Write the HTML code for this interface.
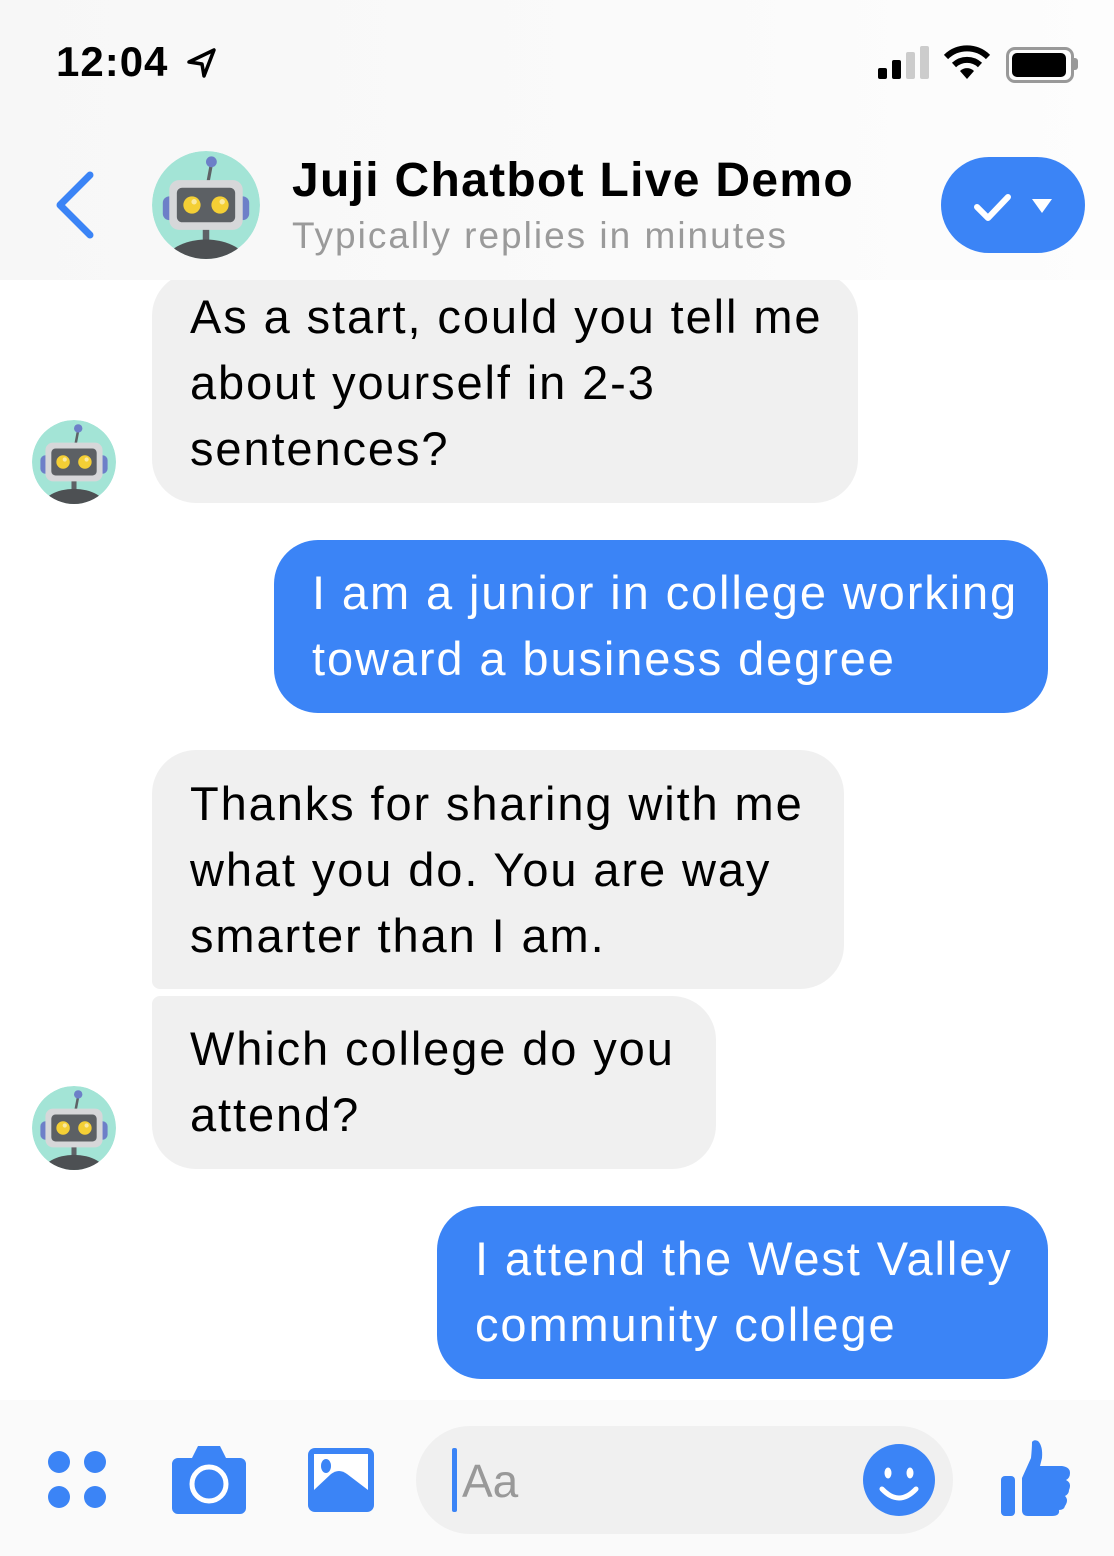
<!DOCTYPE html><html><head><meta charset="utf-8"><style>
body{margin:0;width:1114px;height:1556px;background:#fff;position:relative;overflow:hidden;font-family:"Liberation Sans",sans-serif}
.a{position:absolute}
.b{position:absolute;font-size:47px;line-height:66px;padding:20px 38px 21px;box-sizing:border-box;border-radius:44px;letter-spacing:1.9px;white-space:nowrap}
.g{background:#f0f0f0;color:#000}
.u{background:#3b84f6;color:#fff}
</style></head><body>
<svg width="0" height="0" style="position:absolute"><defs>
<clipPath id="cc"><circle cx="50" cy="50" r="50"/></clipPath>
<g id="bot"><g clip-path="url(#cc)"><circle cx="50" cy="50" r="50" fill="#a3e4d6"/>
<rect x="10" y="42" width="12" height="22" rx="6" fill="#6d7fc8"/><rect x="78" y="42" width="12" height="22" rx="6" fill="#6d7fc8"/>
<line x1="52" y1="28" x2="55" y2="12" stroke="#5e6266" stroke-width="3"/><circle cx="55" cy="10" r="5" fill="#6d7fc8"/>
<rect x="47" y="70" width="6" height="14" fill="#5e6266"/>
<ellipse cx="50" cy="104" rx="38" ry="22" fill="#4d5053"/>
<rect x="16" y="27" width="68" height="46" rx="9" fill="#d6d7d9"/>
<rect x="23" y="34" width="54" height="32" rx="5" fill="#5c6064"/>
<circle cx="37" cy="50" r="8" fill="#f4cf35"/><circle cx="63" cy="50" r="8" fill="#f4cf35"/>
<circle cx="39" cy="47" r="2.5" fill="#fff8"/><circle cx="65" cy="47" r="2.5" fill="#fff8"/></g></g>
</defs></svg>
<div class="b g" style="left:152px;top:272px;width:706px;height:231px;padding-top:12px">As a start, could you tell me<br>about yourself in 2-3<br>sentences?</div>
<div class="a" style="left:0;top:0;width:1114px;height:280px;background:linear-gradient(90deg,#f7f7f7,#fafafa 60%,#fdfdfd)"></div>
<div class="a" style="left:56px;top:38px;font-size:42px;font-weight:bold;letter-spacing:1px">12:04</div>
<svg class="a" style="left:186px;top:46px" width="32" height="34" viewBox="0 0 32 34"><path d="M3 16 L28 4 L18 30 L16 18 Z" fill="none" stroke="#000" stroke-width="3.5" stroke-linejoin="round"/></svg>
<div class="a" style="left:878px;top:68px;width:9px;height:11px;background:#000;border-radius:2px"></div>
<div class="a" style="left:892px;top:60px;width:9px;height:19px;background:#000;border-radius:2px"></div>
<div class="a" style="left:906px;top:52px;width:9px;height:27px;background:#ccc;border-radius:2px"></div>
<div class="a" style="left:920px;top:46px;width:9px;height:33px;background:#ccc;border-radius:2px"></div>
<svg class="a" style="left:943px;top:45px" width="48" height="36" viewBox="0 0 48 36"><path d="M3 12 A30 30 0 0 1 45 12" fill="none" stroke="#000" stroke-width="6"/><path d="M11 20 A19 19 0 0 1 37 20" fill="none" stroke="#000" stroke-width="6"/><path d="M17 26 L24 34 L31 26 A10 10 0 0 0 17 26Z"/></svg>
<div class="a" style="left:1006px;top:47px;width:62px;height:30px;border:3px solid #999;border-radius:9px"></div>
<div class="a" style="left:1012px;top:53px;width:54px;height:24px;background:#000;border-radius:5px"></div>
<div class="a" style="left:1074px;top:58px;width:4px;height:12px;background:#999;border-radius:0 3px 3px 0"></div>
<svg class="a" style="left:52px;top:170px" width="44" height="70" viewBox="0 0 44 70"><path d="M38 5 L8 35 L38 65" fill="none" stroke="#3b84f6" stroke-width="7" stroke-linecap="round" stroke-linejoin="round"/></svg>
<svg class="a" style="left:152px;top:151px" width="108" height="108" viewBox="0 0 100 100"><use href="#bot"/></svg>
<div class="a" style="left:292px;top:153px;font-size:48px;font-weight:bold;letter-spacing:1.3px">Juji Chatbot Live Demo</div>
<div class="a" style="left:292px;top:215px;font-size:37px;color:#9a9a9a;letter-spacing:2px">Typically replies in minutes</div>
<div class="a" style="left:941px;top:157px;width:144px;height:96px;border-radius:48px;background:#3b84f6"></div>
<svg class="a" style="left:972px;top:185px" width="90" height="40" viewBox="0 0 90 40"><path d="M5 22 L16 33 L36 12" fill="none" stroke="#fff" stroke-width="6" stroke-linecap="round" stroke-linejoin="round"/><path d="M60 14 L80 14 L70 28Z" fill="#fff"/></svg>

<svg class="a" style="left:32px;top:420px" width="84" height="84" viewBox="0 0 100 100"><use href="#bot"/></svg>
<div class="b u" style="left:274px;top:540px;width:774px;height:173px">I am a junior in college working<br>toward a business degree</div>
<div class="b g" style="left:152px;top:750px;width:692px;height:239px;border-bottom-left-radius:8px;padding-top:21px">Thanks for sharing with me<br>what you do. You are way<br>smarter than I am.</div>
<div class="b g" style="left:152px;top:996px;width:564px;height:173px;border-top-left-radius:8px">Which college do you<br>attend?</div>
<svg class="a" style="left:32px;top:1086px" width="84" height="84" viewBox="0 0 100 100"><use href="#bot"/></svg>
<div class="b u" style="left:437px;top:1206px;width:611px;height:173px">I attend the West Valley<br>community college</div>

<div class="a" style="left:0;top:1400px;width:1114px;height:156px;background:#fafafa"></div>
<svg class="a" style="left:40px;top:1445px" width="72" height="72" viewBox="0 0 72 72" fill="#3b84f6"><circle cx="19" cy="17" r="11"/><circle cx="55" cy="17" r="11"/><circle cx="19" cy="52" r="11"/><circle cx="55" cy="52" r="11"/></svg>
<svg class="a" style="left:170px;top:1444px" width="80" height="72" viewBox="0 0 80 72"><path d="M8 14 H22 L28 2 H50 L56 14 H70 A6 6 0 0 1 76 20 V64 A6 6 0 0 1 70 70 H8 A6 6 0 0 1 2 64 V20 A6 6 0 0 1 8 14Z" fill="#3b84f6"/><circle cx="39" cy="40" r="17" fill="none" stroke="#fff" stroke-width="5"/></svg>
<svg class="a" style="left:306px;top:1446px" width="70" height="68" viewBox="0 0 70 68"><rect x="2" y="2" width="66" height="64" rx="7" fill="#3b84f6"/><rect x="8" y="8" width="54" height="36" fill="#fff"/><path d="M8 44 L25 28 Q33 22 41 28 L62 44Z" fill="#3b84f6"/><ellipse cx="20" cy="20" rx="5" ry="7" fill="#3b84f6"/></svg>
<div class="a" style="left:416px;top:1426px;width:537px;height:108px;border-radius:54px;background:#f0f0f0"></div>
<div class="a" style="left:452px;top:1448px;width:5px;height:64px;background:#3b84f6;border-radius:2px"></div>
<div class="a" style="left:462px;top:1454px;font-size:46px;color:#999">Aa</div>
<svg class="a" style="left:862px;top:1443px" width="74" height="74" viewBox="0 0 74 74"><circle cx="37" cy="37" r="36" fill="#3b84f6"/><ellipse cx="26" cy="30" rx="3.5" ry="5.5" fill="#fff"/><ellipse cx="48" cy="30" rx="3.5" ry="5.5" fill="#fff"/><path d="M20 46 Q37 64 54 46" fill="none" stroke="#fff" stroke-width="5" stroke-linecap="round"/></svg>
<svg class="a" style="left:998px;top:1438px" width="80" height="80" viewBox="0 0 80 80" fill="#3b84f6"><rect x="3" y="38" width="14" height="40" rx="4"/><path d="M24 40 L33 20 Q34 10 34 4 Q36 1 40 3 Q45 8 44 20 L42 28 H64 Q72 29 72 35 Q72 40 68 42 Q74 45 71 52 Q71 56 67 58 Q71 62 67 68 Q66 72 61 72 Q62 78 54 78 H30 Q24 78 24 72Z"/></svg>
</body></html>
